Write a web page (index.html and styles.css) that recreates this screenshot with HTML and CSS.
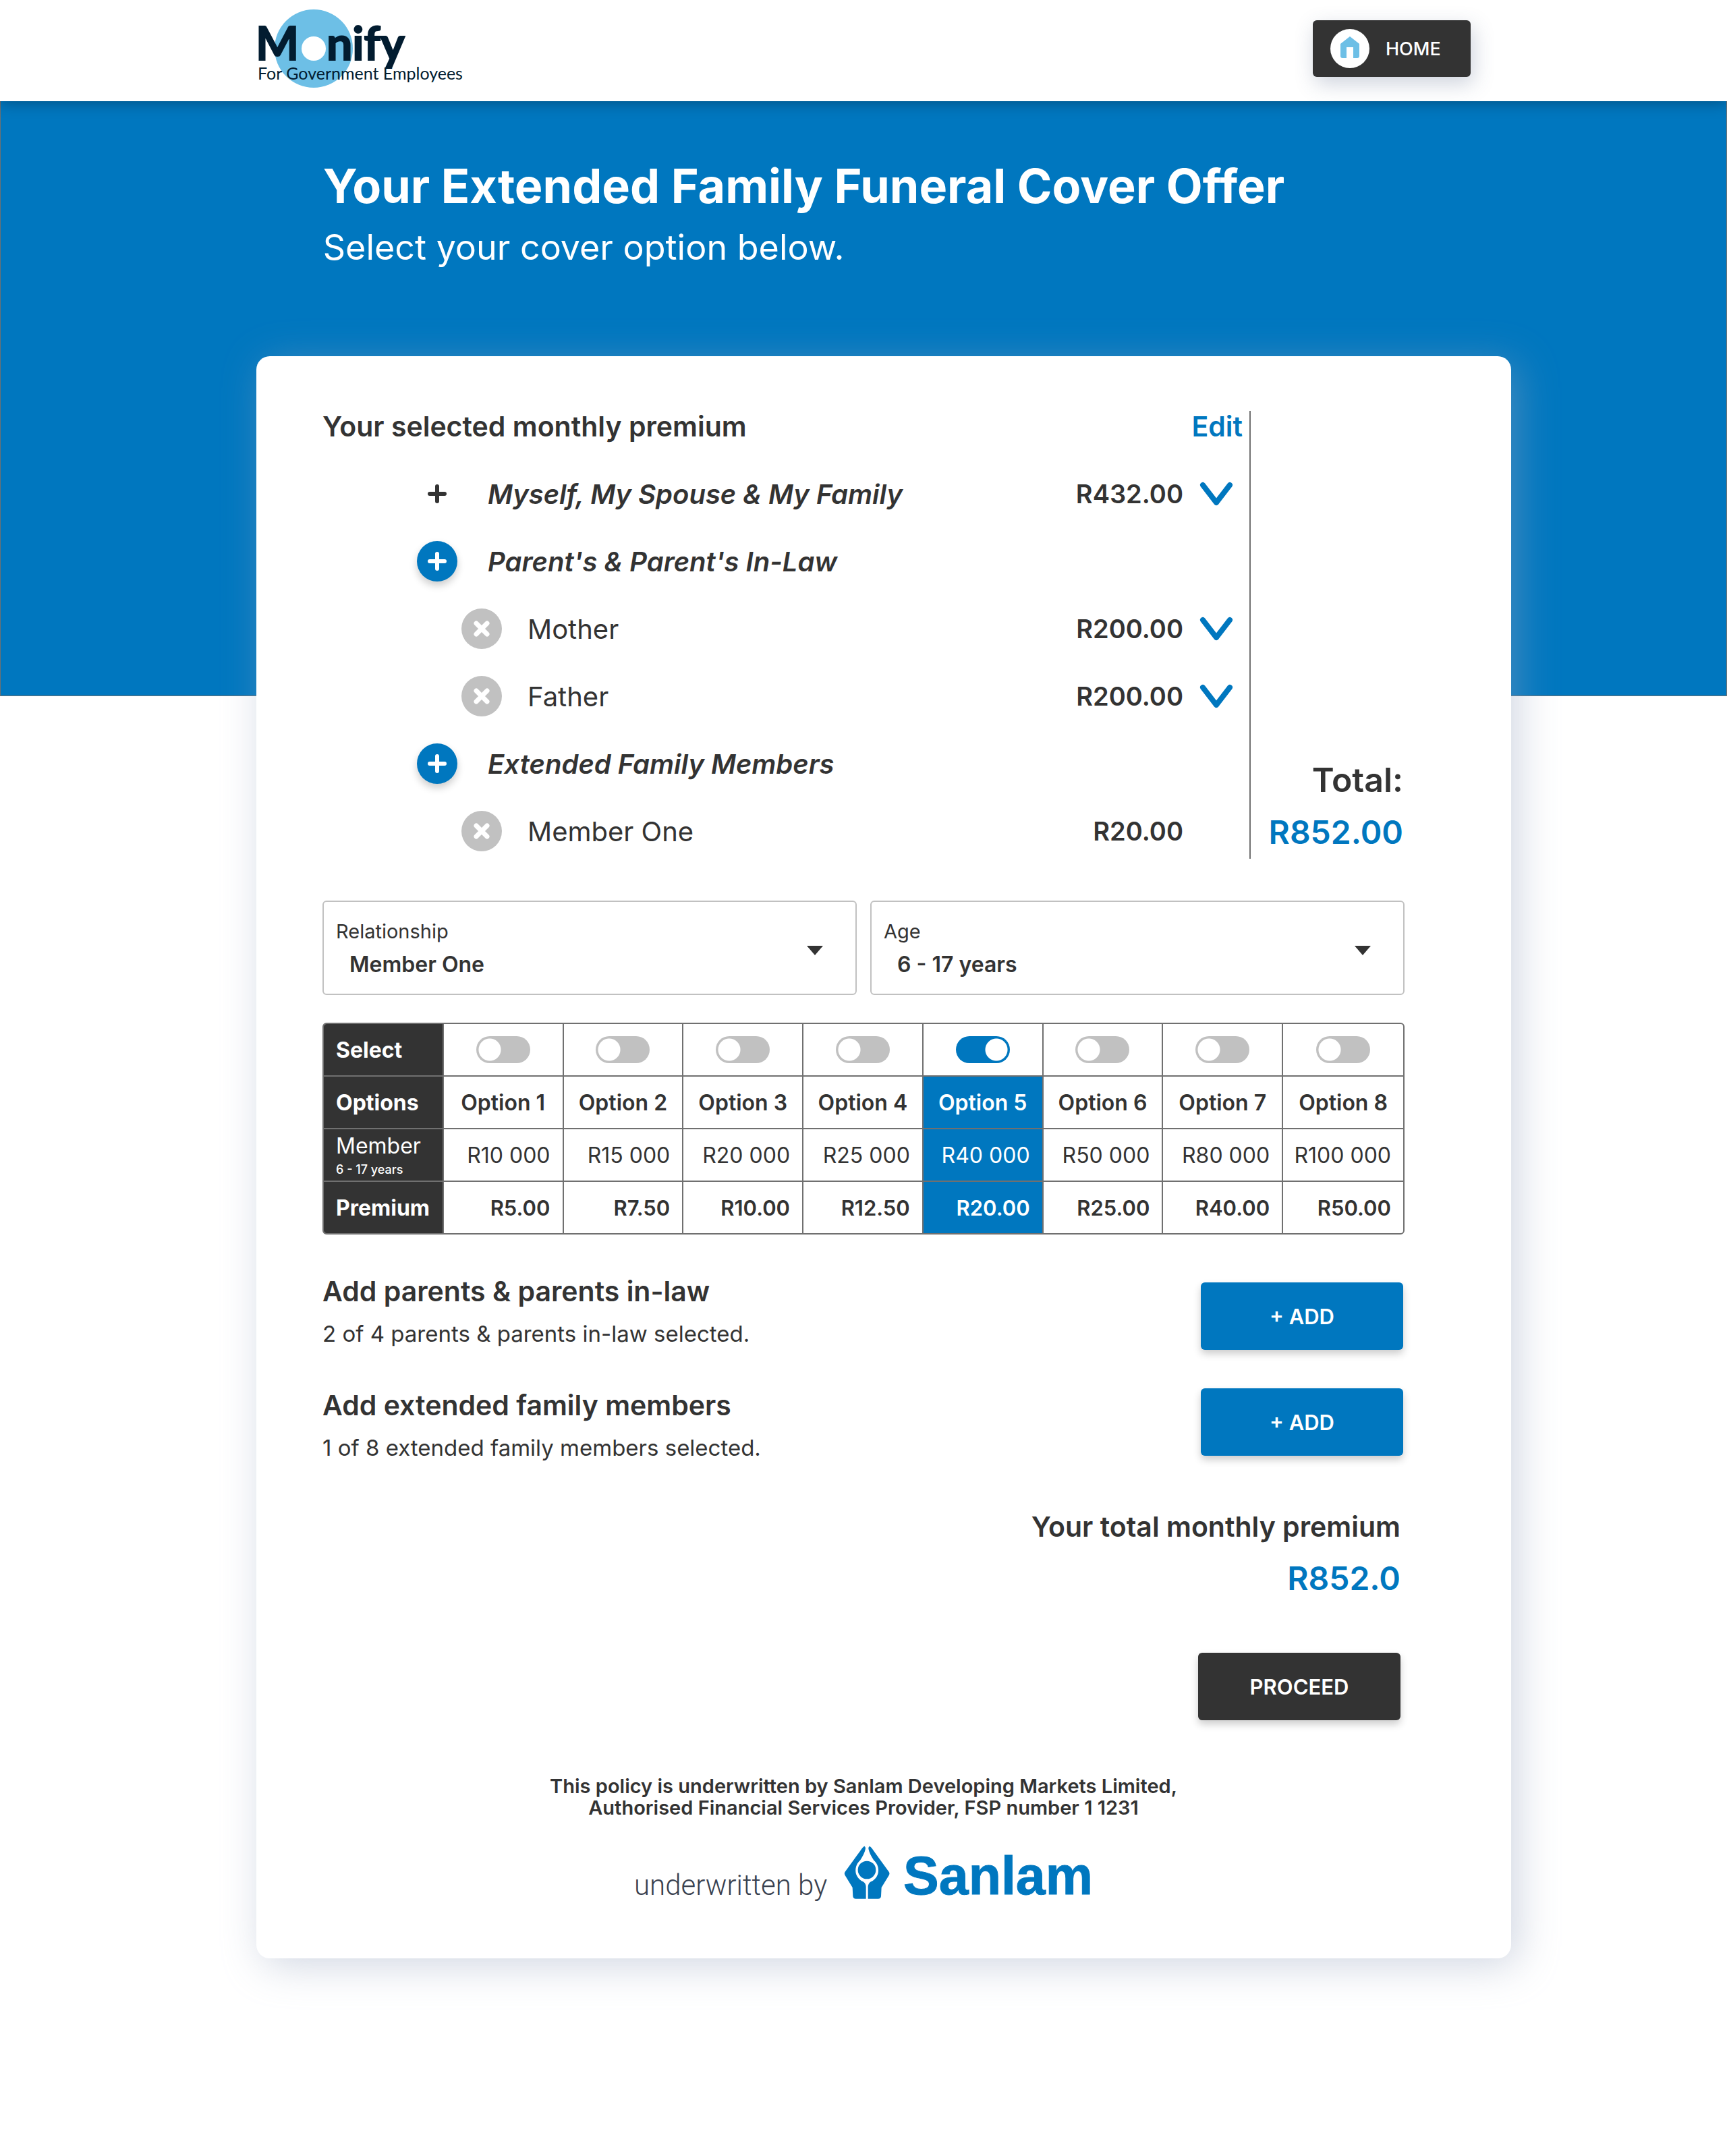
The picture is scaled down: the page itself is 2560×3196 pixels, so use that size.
FILE: index.html
```
<!DOCTYPE html>
<html lang="en">
<head>
<meta charset="utf-8">
<meta name="viewport" content="width=device-width, initial-scale=1">
<title>Monify - Extended Family Funeral Cover</title>
<link rel="stylesheet" href="styles.css">
</head>
<body>
<svg width="0" height="0" class="sprite" aria-hidden="true">
  <symbol id="plus" viewBox="0 0 60 60"><path d="M30 19V41M19 30H41" fill="none" stroke="currentColor" stroke-width="6" stroke-linecap="round"/></symbol>
  <symbol id="cross" viewBox="0 0 60 60"><path d="M22 22L38 38M38 22L22 38" fill="none" stroke="currentColor" stroke-width="7" stroke-linecap="round"/></symbol>
  <symbol id="chevron" viewBox="0 0 50 36"><path d="M5 5L25 31L45 5" fill="none" stroke="currentColor" stroke-width="8" stroke-linecap="round" stroke-linejoin="round"/></symbol>
  <symbol id="caret" viewBox="0 0 24 14"><path d="M0 0H24L12 14Z" fill="currentColor"/></symbol>
</svg>

<header class="topbar">
  <div class="topbar-inner">
    <a class="logo" href="#" aria-label="Monify for Government Employees">
      <svg width="312" height="120" viewBox="0 0 312 120">
        <circle cx="81" cy="60" r="58" fill="#6dbfe6"/>
        <circle cx="81" cy="60" r="18" fill="#fff"/>
        <g fill="#021c30">
          <text class="logo-name" x="-5" y="77">M</text>
          <text class="logo-name" x="100" y="77">nify</text>
          <text class="logo-tag" x="-2" y="106">For Government Employees</text>
        </g>
      </svg>
    </a>
    <a class="home" href="#">
      <svg width="58" height="58" viewBox="0 0 58 58" aria-hidden="true">
        <circle cx="29" cy="29" r="29" fill="#fff"/>
        <path d="M29 11L43 22V40Q43 43 40 43H34V27H24V43H18Q15 43 15 40V22Z" fill="#6dbfe6"/>
      </svg>
      HOME
    </a>
  </div>
</header>

<section class="hero">
  <div class="hero-inner">
    <h1>Your Extended Family Funeral Cover Offer</h1>
    <p>Select your cover option below.</p>
  </div>
</section>

<main class="page">
  <div class="card">
    <section class="summary">
      <div class="lines">
        <div class="line line-head">
          <h2>Your selected monthly premium</h2>
          <a class="edit" href="#">Edit</a>
        </div>
        <div class="line">
          <div class="who"><button class="round plain" aria-label="Add to my family"><svg><use href="#plus"/></svg></button><em>Myself, My Spouse &amp; My Family</em></div>
          <span class="price">R432.00</span>
          <button class="expand" aria-label="Show family details"><svg><use href="#chevron"/></svg></button>
        </div>
        <div class="line">
          <div class="who"><button class="round add" aria-label="Add a parent"><svg><use href="#plus"/></svg></button><em>Parent's &amp; Parent's In-Law</em></div>
        </div>
        <div class="line">
          <div class="who member"><button class="round remove" aria-label="Remove mother"><svg><use href="#cross"/></svg></button><span>Mother</span></div>
          <span class="price">R200.00</span>
          <button class="expand" aria-label="Show mother details"><svg><use href="#chevron"/></svg></button>
        </div>
        <div class="line">
          <div class="who member"><button class="round remove" aria-label="Remove father"><svg><use href="#cross"/></svg></button><span>Father</span></div>
          <span class="price">R200.00</span>
          <button class="expand" aria-label="Show father details"><svg><use href="#chevron"/></svg></button>
        </div>
        <div class="line">
          <div class="who"><button class="round add" aria-label="Add an extended family member"><svg><use href="#plus"/></svg></button><em>Extended Family Members</em></div>
        </div>
        <div class="line">
          <div class="who member"><button class="round remove" aria-label="Remove member one"><svg><use href="#cross"/></svg></button><span>Member One</span></div>
          <span class="price">R20.00</span>
        </div>
      </div>
      <aside class="total">
        <span class="total-label">Total:</span>
        <span class="amount">R852.00</span>
      </aside>
    </section>

    <div class="fields">
      <div class="field">
        <label for="relationship">Relationship</label>
        <select id="relationship"><option>Member One</option></select>
        <svg class="caret" aria-hidden="true"><use href="#caret"/></svg>
      </div>
      <div class="field">
        <label for="age">Age</label>
        <select id="age"><option>6 - 17 years</option></select>
        <svg class="caret" aria-hidden="true"><use href="#caret"/></svg>
      </div>
    </div>

    <table class="options">
      <tr class="pick">
        <th scope="row">Select</th>
        <td><input type="radio" name="option" aria-label="Option 1"></td>
        <td><input type="radio" name="option" aria-label="Option 2"></td>
        <td><input type="radio" name="option" aria-label="Option 3"></td>
        <td><input type="radio" name="option" aria-label="Option 4"></td>
        <td><input type="radio" name="option" aria-label="Option 5" checked></td>
        <td><input type="radio" name="option" aria-label="Option 6"></td>
        <td><input type="radio" name="option" aria-label="Option 7"></td>
        <td><input type="radio" name="option" aria-label="Option 8"></td>
      </tr>
      <tr class="names">
        <th scope="row">Options</th>
        <td>Option 1</td><td>Option 2</td><td>Option 3</td><td>Option 4</td><td class="on">Option 5</td><td>Option 6</td><td>Option 7</td><td>Option 8</td>
      </tr>
      <tr class="cover">
        <th scope="row">Member<small>6 - 17 years</small></th>
        <td>R10 000</td><td>R15 000</td><td>R20 000</td><td>R25 000</td><td class="on">R40 000</td><td>R50 000</td><td>R80 000</td><td>R100 000</td>
      </tr>
      <tr class="premium">
        <th scope="row">Premium</th>
        <td>R5.00</td><td>R7.50</td><td>R10.00</td><td>R12.50</td><td class="on">R20.00</td><td>R25.00</td><td>R40.00</td><td>R50.00</td>
      </tr>
    </table>

    <section class="extras">
      <div class="extra extra-low">
        <div>
          <h2>Add parents &amp; parents in-law</h2>
          <p>2 of 4 parents &amp; parents in-law selected.</p>
        </div>
        <button class="btn">+ ADD</button>
      </div>
      <div class="extra">
        <div>
          <h2>Add extended family members</h2>
          <p>1 of 8 extended family members selected.</p>
        </div>
        <button class="btn">+ ADD</button>
      </div>
    </section>

    <section class="checkout">
      <h2>Your total monthly premium</h2>
      <p class="amount">R852.0</p>
      <button class="btn dark">PROCEED</button>
    </section>

    <footer class="policy">
      <p>This policy is underwritten by Sanlam Developing Markets Limited,<br>Authorised Financial Services Provider, FSP number 1 1231</p>
      <svg width="680" height="100" viewBox="0 0 680 100" role="img" aria-label="underwritten by Sanlam">
        <text class="by" x="0" y="78" fill="#39414f">underwritten by</text>
        <g transform="translate(300 -1) scale(.3333)" fill="#0077bf">
          <path id="hand" d="M124 20Q131 24 128 35Q124 54 105 83C88 98 82 118 86 140C92 162 108 174 118 178Q131 186 131 202V254H86Q74 254 73 243L71 204L38 150Q33 142 38 134L105 42Q116 24 124 20Z"/>
          <use href="#hand" transform="translate(271 0) scale(-1 1)"/>
          <circle cx="135" cy="126" r="40"/>
        </g>
        <text class="sanlam" x="399" y="77">Sanlam</text>
      </svg>
    </footer>
  </div>
</main>
</body>
</html>
```
FILE: styles.css
```
:root {
  --blue: #0077bf;
  --ink: #333;
  --line: #707070;
  --grey: #c1c1c1;
}

* { box-sizing: border-box; }

body {
  margin: 0;
  background: #fff;
  color: var(--ink);
  font-family: Inter, "Open Sans", sans-serif;
  font-size: 40px;
}

h1, h2, p { margin: 0; }
a { text-decoration: none; }
button { font: inherit; border: 0; padding: 0; cursor: pointer; }
.sprite { position: absolute; }

/* Header, hero and card share one three-column frame */
.topbar, .hero, .page {
  display: grid;
  grid-template-columns: 38fr 186fr 32fr;
}
.topbar-inner, .hero-inner, .card { grid-column: 2; min-width: 0; }

.topbar {
  position: relative;
  z-index: 1;
  height: 150px;
  background: #fff;
  box-shadow: 0 3px 20px rgba(0, 0, 0, .3);
}
.topbar-inner {
  display: flex;
  justify-content: space-between;
  align-items: center;
  padding: 0 60px 6px 4px;
}
.logo, .logo svg, .home svg { display: block; }
.logo svg { overflow: visible; }
.logo-name { font: 700 68px Lato, sans-serif; stroke: #021c30; stroke-width: 2px; }
.logo-tag { font: 400 25px Lato, sans-serif; }

.home {
  display: flex;
  align-items: center;
  gap: 24px;
  width: 234px;
  height: 84px;
  padding-left: 26px;
  border-radius: 6px;
  background: var(--ink);
  box-shadow: 4px 10px 30px rgba(60, 80, 120, .25);
  color: #fff;
  font-size: 27px;
  font-weight: 500;
}

.hero {
  min-height: 882px;
  padding-top: 82px;
  border: 1px solid var(--line);
  border-top: 0;
  background: var(--blue);
  color: #fff;
}
.hero-inner { padding-left: 98px; }
.hero h1 { font-size: 70px; line-height: 88px; font-weight: 700; }
.hero p { margin-top: 15px; font-size: 52px; line-height: 64px; }

.page { margin-top: -504px; padding-bottom: 292px; }
.card {
  padding: 54px 158px 72px 98px;
  border-radius: 20px;
  background: #fff;
  box-shadow: 10px 10px 60px rgba(150, 165, 190, .45);
}
.card h2 { font-size: 41px; line-height: 50px; font-weight: 600; }

.summary { display: grid; grid-template-columns: 1fr 230px; }
.line {
  display: grid;
  grid-template-columns: 1fr auto 98px;
  align-items: center;
  height: 100px;
}
.line-head { grid-template-columns: 1fr auto; padding-right: 10px; }
.edit { color: var(--blue); font-size: 41px; font-weight: 600; }
.who { display: flex; align-items: center; gap: 45px; padding-left: 140px; }
.who em { font-weight: 600; }
.member { gap: 38px; padding-left: 206px; }
.price { font-size: 38px; font-weight: 600; }

.round { width: 60px; height: 60px; border-radius: 50%; color: #fff; }
.round svg { display: block; width: 60px; height: 60px; }
.plain { background: none; color: var(--ink); }
.add { background: var(--blue); box-shadow: 0 6px 12px rgba(0, 0, 0, .2); }
.remove { background: var(--grey); }
.expand { justify-self: start; margin-left: 24px; background: none; color: var(--blue); }
.expand svg { display: block; width: 50px; height: 36px; }

.total {
  display: flex;
  flex-direction: column;
  justify-content: flex-end;
  align-items: flex-end;
  margin: 27px 0 9px;
  padding-right: 2px;
  border-left: 2px solid var(--line);
  line-height: 78px;
}
.total-label { font-size: 50px; font-weight: 600; }
.amount { color: var(--blue); font-size: 48px; font-weight: 600; }

.fields { display: grid; grid-template-columns: 1fr 1fr; gap: 20px; margin-top: 53px; }
.field {
  display: grid;
  grid-template-columns: 1fr auto;
  grid-template-rows: 40px 56px;
  min-height: 140px;
  padding: 24px 48px 0 18px;
  border: 2px solid var(--grey);
  border-radius: 6px;
}
.field label { font-size: 29px; line-height: 40px; }
.field select {
  grid-row: 2;
  padding: 0 0 0 20px;
  border: 0;
  appearance: none;
  background: none;
  color: var(--ink);
  font: 600 32px Inter, "Open Sans", sans-serif;
}
.caret { grid-area: 1 / 2 / 3 / 3; align-self: center; width: 24px; height: 18px; }

.options {
  width: 100%;
  margin-top: 41px;
  table-layout: fixed;
  border: 2px solid var(--line);
  border-radius: 6px;
  border-spacing: 0;
  border-collapse: separate;
  overflow: hidden;
  font-size: 32px;
}
.options th, .options td {
  height: 78px;
  padding: 0 18px 0 0;
  border: solid var(--line);
  border-width: 0 2px 2px 0;
  text-align: right;
}
.options th {
  padding: 0 0 0 18px;
  background: var(--ink);
  color: #fff;
  font-weight: 700;
  text-align: left;
}
.options tr > :last-child { border-right: 0; }
.options tr:last-child > * { height: 76px; border-bottom: 0; }
.options .pick td, .options .names td { padding: 0; text-align: center; }
.options .names td { font-weight: 600; }
.options .cover th { line-height: 38px; font-weight: 400; vertical-align: bottom; }
.options small { display: block; font-size: 18px; line-height: 32px; font-weight: 500; }
.options .premium td { font-size: 31px; font-weight: 600; }
.options .on { background: var(--blue); color: #fff; }

.pick input {
  display: block;
  width: 80px;
  height: 40px;
  margin: 0 auto;
  border-radius: 20px;
  appearance: none;
  background: radial-gradient(circle at 20px 20px, #fff 16px, var(--grey) 17px);
}
.pick input:checked {
  background: radial-gradient(circle at 60px 20px, #fff 16px, var(--blue) 17px);
}

.extras { display: grid; gap: 57px; margin-top: 59px; }
.extra {
  display: flex;
  justify-content: space-between;
  align-items: flex-start;
  padding-right: 2px;
}
.extra-low { align-items: flex-end; }
.extra p { margin-top: 14px; font-size: 33px; line-height: 48px; }

.btn {
  width: 300px;
  height: 100px;
  border-radius: 6px;
  background: var(--blue);
  box-shadow: 0 6px 12px rgba(0, 0, 0, .2);
  color: #fff;
  font-size: 31px;
  font-weight: 600;
}
.dark { background: var(--ink); }

.checkout {
  display: flex;
  flex-direction: column;
  align-items: flex-end;
  margin-top: 68px;
  padding-right: 6px;
}
.checkout .amount { margin-top: 22px; line-height: 60px; }
.checkout .btn { margin-top: 80px; }

.policy { margin-top: 82px; text-align: center; }
.policy p { font-size: 29px; line-height: 32px; font-weight: 600; }
.policy svg { display: block; margin: 35px auto 0; }
.by { font: 300 42px Roboto, sans-serif; }
.sanlam {
  fill: var(--blue);
  stroke: var(--blue);
  stroke-width: 1px;
  font: 700 79px "Liberation Sans", Arial, sans-serif;
}
```
